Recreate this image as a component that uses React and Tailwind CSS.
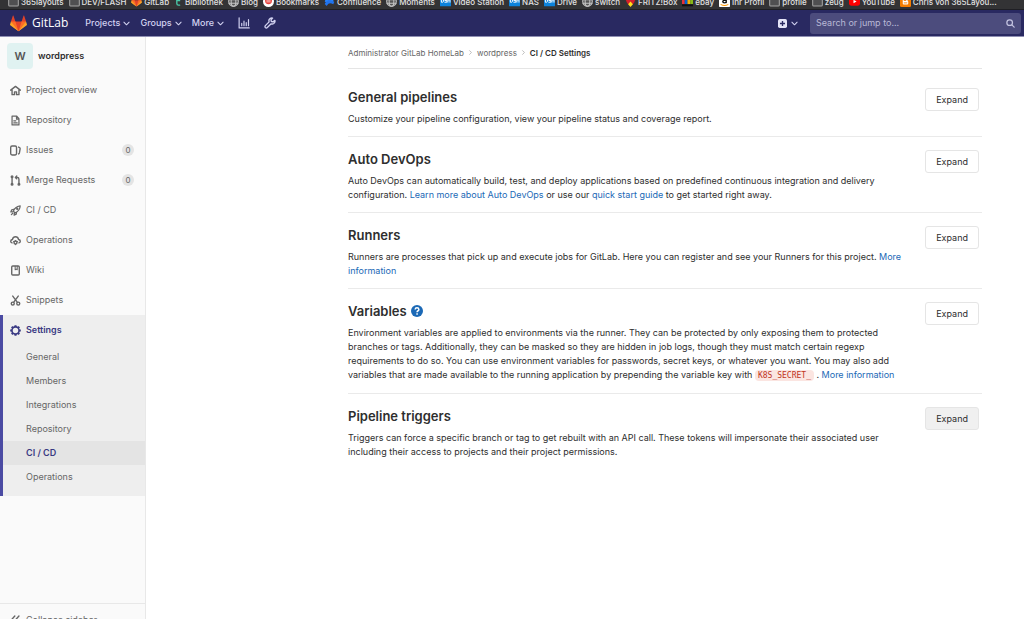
import React from "react";

const S = ({ children, className = "size-[11px]", ...rest }) => (
  <svg viewBox="0 0 16 16" fill="none" stroke="currentColor" strokeWidth="2" strokeLinecap="round" strokeLinejoin="round" aria-hidden="true" className={`${className} shrink-0`} {...rest}>
    {children}
  </svg>
);

const Tanuki = ({ className }) => (
  <svg viewBox="0 0 36 36" className={`${className} shrink-0`} aria-hidden="true">
    <path fill="#e24329" d="M2 14l9.38 9v-9l-4-12.28c-.205-.632-1.176-.632-1.38 0z" />
    <path fill="#e24329" d="M34 14l-9.38 9v-9l4-12.28c.205-.632 1.176-.632 1.38 0z" />
    <path fill="#e24329" d="M18 34.38 3 14h30z" />
    <path fill="#fc6d26" d="M18 34.38 11.38 14H2l4 11z" />
    <path fill="#fc6d26" d="M18 34.38 24.62 14H34l-4 11z" />
    <path fill="#fca326" d="M2 14L.1 20.16c-.18.565 0 1.2.5 1.56l17.42 12.66z" />
    <path fill="#fca326" d="M34 14l1.9 6.16c.18.565 0 1.2-.5 1.56L18 34.38z" />
  </svg>
);

const Folder = () => (
  <S className="h-[11px] w-[11px] text-[#a5a5a5]" strokeWidth="1.5">
    <rect x="1" y="1" width="14" height="13.5" rx="1.5" fill="#4f4f51" />
  </S>
);
const Globe = () => (
  <S className="size-[11px] text-[#c4c4c4]" strokeWidth="1.5">
    <circle cx="8" cy="8" r="7" fill="#555" />
    <ellipse cx="8" cy="8" rx="3.4" ry="7" />
    <path d="M1.5 10.5h13M1.5 5.5h13" />
  </S>
);
const Dsm = () => (
  <S stroke="none">
    <rect width="16" height="15" rx="1" fill="#0c83dc" />
    <path d="M2 4v5h2l1-1V5L4 4zM10 4 7 4v2.5h3V9H7M11.500 9V4L13 6.500 14.500 4v5" stroke="#fff" strokeWidth="1.400" fill="none" />
  </S>
);
const BibIcon = () => (
  <S className="h-[11px] w-[9px] text-[#49c9a7]" strokeWidth="2.4"><path d="M5 1v10.500q0 3 3 3h2M5 6.500h5" /></S>
);
const RedIcon = () => (
  <S stroke="none">
    <circle cx="8" cy="8" r="8" fill="#fff" />
    <circle cx="8" cy="7" r="5" fill="#e8413c" />
    <path d="M5.500 6h5M5.500 8.500h5" stroke="#fff" strokeWidth="1" />
  </S>
);
const Confluence = () => (
  <S stroke="none">
    <path fill="#2684ff" d="M15 4.500 12 1.500C8.500 7.500 6.500 6.500 2.500 4.500L1 8c7 3.500 10.500 3 14-3.500z" />
    <path fill="#2073ee" d="M1 11.500 4 14.500c3-5.500 5.500-4.500 9.500-2.500L15 8.500C8 5 4.500 5.500 1 11.500z" />
  </S>
);
const Fritz = () => (
  <S stroke="none">
    <path fill="#d3202b" d="M0 3 4 0h8l4 3-3 7-5 5-5-5z" />
    <path fill="#ffdf1b" d="m8 8 3.500 4L8 16l-3.500-4z" />
  </S>
);
const Ebay = () => (
  <S stroke="none">
    <path fill="#e53238" d="M0 0h4v12H0z" />
    <path fill="#0064d2" d="M4 0h4v12H4z" />
    <path fill="#f5af02" d="M8 0h4v12H8z" />
    <path fill="#86b817" d="M12 0h4v12h-4z" />
    <path fill="#111" d="M0 12h16v3H0z" />
  </S>
);
const Amazon = () => (
  <S stroke="none">
    <rect width="16" height="16" rx="1" fill="#fff" />
    <path d="M5.500 3.500q5-2 5 1v5M10.500 6q-5 0-5 2t2.500 2 2.500-2" fill="none" stroke="#111" strokeWidth="2" />
    <path d="M3 12.500q5 2.500 10 0" fill="none" stroke="#f90" strokeWidth="1.500" />
  </S>
);
const YouTube = () => (
  <S stroke="none">
    <rect y="2" width="16" height="12" rx="3" fill="#f00" />
    <path fill="#fff" d="m6.500 5.500 4.500 2.500-4.500 2.500z" />
  </S>
);
const Blogger = () => (
  <S stroke="none">
    <rect width="16" height="16" rx="2" fill="#f57d00" />
    <path d="M4 4h5q2 0 2 2t1 2v3q0 1.500-1.500 1.500h-5Q4 12.500 4 11z" fill="#fff" />
    <path d="M6 6.500h2.500M6 10h4" stroke="#f57d00" strokeWidth="1.300" />
  </S>
);

const bookmarks = [
  [Folder, "365layouts"],
  [Folder, "DEV/FLASH"],
  [() => <Tanuki className="size-[11px]" />, "GitLab"],
  [BibIcon, "Bibliothek"],
  [Globe, "Blog"],
  [RedIcon, "Bookmarks"],
  [Confluence, "Confluence"],
  [Globe, "Moments"],
  [Dsm, "Video Station"],
  [Dsm, "NAS"],
  [Dsm, "Drive"],
  [Globe, "switch"],
  [Fritz, "FRITZ!Box"],
  [Ebay, "ebay"],
  [Amazon, "Ihr Profil"],
  [Folder, "profile"],
  [Folder, "zeug"],
  [YouTube, "YouTube"],
  [Blogger, "Chris von 365Layou..."],
];

const Chevron = () => (
  <S className="size-[7px]" strokeWidth="2.4"><path d="m2 5 6 6 6-6" /></S>
);

const navItems = [
  ["Project overview", null, <S key="i"><path d="M1 7.500 8 2l7 5.500M3 7v7h3.500v-4h3v4H13V7" /></S>],
  ["Repository", null, <S key="i"><path d="M3 1.500h6.500l3.500 4v9H3zM9.500 2v4H13M5.500 8.500h3M5.500 11.500h5" strokeWidth="1.800" /></S>],
  ["Issues", "0", <S key="i"><rect x="1" y="1.500" width="8.500" height="13" rx="2" /><path d="M12.500 3q2.500.500 2.200 2.500l-1 6q-.2 1-1.200 1.500" /></S>],
  ["Merge Requests", "0", <S key="i"><path d="M3 3.500v9M13 12.500V6q0-2.500-2.500-2.500H8M9.800 1.500 7.800 3.500l2 2" /><circle cx="3" cy="2.700" r="1.200" /><circle cx="3" cy="13.300" r="1.200" /><circle cx="13" cy="13.300" r="1.200" /></S>],
  ["CI / CD", null, <S key="i" strokeWidth="1.800"><path d="M5 9q2-6.500 9.800-7.800Q14.500 8.500 7.500 11.500zM5.500 6.500 2.500 7 1.200 10l3.300-.5M9.500 10.500l-.5 3-3 1.300.500-3.300M2 14l2-2" /><circle cx="10.500" cy="5.500" r=".8" /></S>],
  ["Operations", null, <S key="i"><path d="M3 11.500Q1 11 1 9t2.500-2.500Q4.500 2.500 8 2.500t4.500 4Q15 7 15 9t-2 2.500" /><circle cx="8" cy="11" r="2.200" /><path d="M8 7.800v1M8 13.200v1M5 9.500l1 .5M11 9.500l-1 .5" strokeWidth="1.400" /></S>],
  ["Wiki", null, <S key="i"><rect x="2.500" y="1.500" width="11" height="13" rx="1.500" /><path d="M7.500 2v5l1.500-1 1.500 1V2" strokeWidth="1.500" /></S>],
  ["Snippets", null, <S key="i"><path d="m4 1.500 6.500 9M12 1.500l-6.500 9" /><circle cx="4" cy="12.500" r="2.200" /><circle cx="12" cy="12.500" r="2.200" /></S>],
];

const Gear = () => (
  <S strokeWidth="2.400">
    <circle cx="8" cy="8" r="5.200" />
    <path strokeWidth="3" strokeLinecap="butt" d="M8 .3v2.500M8 13.200v2.500M.3 8h2.500M13.200 8h2.500M2.500 2.500l1.700 1.700M11.800 11.800l1.700 1.700M2.500 13.500l1.700-1.700M11.800 4.200l1.700-1.700" />
  </S>
);

const subItems = ["General", "Members", "Integrations", "Repository", "CI / CD", "Operations"];

const A = ({ children }) => <a href="#" className="text-[#1b69b6]">{children}</a>;

const sections = [
  { title: "General pipelines", body: "Customize your pipeline configuration, view your pipeline status and coverage report." },
  { title: "Auto DevOps", body: <>Auto DevOps can automatically build, test, and deploy applications based on predefined continuous integration and delivery configuration. <A>Learn more about Auto DevOps</A> or use our <A>quick start guide</A> to get started right away.</> },
  { title: "Runners", body: <>Runners are processes that pick up and execute jobs for GitLab. Here you can register and see your Runners for this project. <A>More information</A></> },
  { title: "Variables", help: true, body: <>Environment variables are applied to environments via the runner. They can be protected by only exposing them to protected branches or tags. Additionally, they can be masked so they are hidden in job logs, though they must match certain regexp requirements to do so. You can use environment variables for passwords, secret keys, or whatever you want. You may also add variables that are made available to the running application by prepending the variable key with <code className="rounded-sm bg-[#fbe5e1] px-[3px] py-px font-['DejaVu_Sans_Mono',monospace] text-[8px] text-[#c0341d]">K8S_SECRET_</code> . <A>More information</A></> },
  { title: "Pipeline triggers", active: true, body: "Triggers can force a specific branch or tag to get rebuilt with an API call. These tokens will impersonate their associated user including their access to projects and their project permissions." },
];

export default function App() {
  return (
    <div className="flex h-screen flex-col overflow-hidden bg-white font-['Inter',sans-serif] text-[9px] leading-[14px] text-[#2e2e2e]">
      <nav aria-label="Bookmarks" className="flex h-[10px] shrink-0 items-end gap-[5px] overflow-hidden border-b border-[#1f1f24] bg-[#333335] px-2 text-[#e2e2e2]">
        {bookmarks.map(([Icon, label]) => (
          <a key={label} href="#" className="flex h-[15px] shrink-0 items-center gap-[2px] text-[8px] font-medium whitespace-nowrap">
            <Icon />
            {label}
          </a>
        ))}
      </nav>

      <header className="flex h-[27px] shrink-0 items-center border-b border-[#8f8fb3] bg-[#292961] pr-[3px] pl-[10px] font-medium text-[#d1d1f0]">
        <a href="#" className="flex items-center gap-[5px] font-['Open_Sans',sans-serif] text-[12px] text-white">
          <Tanuki className="size-[17px]" />
          GitLab
        </a>
        <div className="ml-[17px] flex items-center gap-[10px]">
          {["Projects", "Groups", "More"].map((t) => (
            <button key={t} type="button" className="flex items-center gap-[3px]">
              {t}
              <Chevron />
            </button>
          ))}
          <button type="button" aria-label="Activity" className="ml-1">
            <S strokeWidth="1.600" className="block size-[12px]"><path d="M1.500 1v13.500H15M5 11.500v-3M8 11.500v-6M11 11.500v-4M14 11.500v-8" /></S>
          </button>
          <button type="button" aria-label="Admin area" className="ml-1">
            <S strokeWidth="1.800" className="block size-[12px]"><path d="M14.500 4.500 12 6.500 9.800 6l-.5-2.200L11.500 1.500Q8.500.800 7 3.200q-.8 1.500-.2 3.300L1.800 11.500q-1 1.300 0 2.500 1.300 1.200 2.600.1l5.100-5q2 .5 3.500-.4 2.200-1.500 1.500-4.200z" /></S>
          </button>
        </div>
        <button type="button" aria-label="New" className="ml-auto flex items-center gap-1">
          <svg viewBox="0 0 16 16" className="size-[9px]" aria-hidden="true"><rect width="16" height="16" rx="3" fill="#e4e4f7" /><path d="M8 3.500v9M3.500 8h9" stroke="#292961" strokeWidth="2.400" /></svg>
          <Chevron />
        </button>
        <label className="ml-3 flex h-[21px] w-[211px] items-center rounded-[3px] bg-[#4c4c7d] pr-[6px] pl-[6px]">
          <input type="search" aria-label="Search or jump to" placeholder="Search or jump to..." className="min-w-0 flex-1 bg-transparent font-normal outline-none placeholder:text-[#b9b9d6]" />
          <S className="size-[9px] text-[#c3c3e0]" strokeWidth="2.200"><circle cx="6.500" cy="6.500" r="5" /><path d="m10.500 10.500 4 4" /></S>
        </label>
      </header>

      <div className="flex min-h-0 flex-1">
        <aside className="flex w-[146px] shrink-0 flex-col border-r border-[#e8e8e8] bg-[#fafafa] text-[#666]">
          <a href="#" className="flex h-[38px] shrink-0 items-center gap-[5px] pl-[7px] font-semibold text-[#2e2e2e]">
            <span className="flex size-[26px] items-center justify-center rounded-sm bg-[#e0f2f1] text-[11px] text-[#555]">W</span>
            wordpress
          </a>
          <ul>
            {navItems.map(([label, count, icon]) => (
              <li key={label}>
                <a href="#" className="flex h-[30px] items-center gap-[5px] pr-[11px] pl-[10px]">
                  {icon}
                  {label}
                  {count && <span className="ml-auto flex size-[12px] items-center justify-center rounded-full bg-[#e4e4e4] text-[8px]">{count}</span>}
                </a>
              </li>
            ))}
            <li className="border-l-[3px] border-[#4b4ba3] bg-[#eee]">
              <a href="#" className="flex h-[30px] items-center gap-[5px] pl-[7px] font-semibold text-[#393982]">
                <Gear />
                Settings
              </a>
              <ul className="pb-[7px]">
                {subItems.map((t) => (
                  <li key={t}>
                    <a href="#" className={`flex h-6 items-center pl-[23px] ${t === "CI / CD" ? "bg-[#e4e4e4] font-semibold text-[#393982]" : ""}`}>{t}</a>
                  </li>
                ))}
              </ul>
            </li>
          </ul>
          <div className="mt-auto h-[16px] shrink-0 overflow-hidden border-t border-[#e8e8e8]">
            <button type="button" className="flex h-[31px] w-full items-center gap-[5px] pl-[10px]">
              <S><path d="M7 3 2.500 8 7 13M13 3 8.500 8l4.500 5" /></S>
              Collapse sidebar
            </button>
          </div>
        </aside>

        <main className="min-w-0 flex-1 pr-[42px] pl-[202px]">
          <nav aria-label="Breadcrumb" className="mb-[6px] flex h-[32px] items-center gap-1 border-b border-[#e5e5e5] text-[8px] text-[#666]">
            <a href="#">Administrator GitLab HomeLab</a>
            <S className="size-[5px] text-[#999]" strokeWidth="2"><path d="m5 2 6 6-6 6" /></S>
            <a href="#">wordpress</a>
            <S className="size-[5px] text-[#999]" strokeWidth="2"><path d="m5 2 6 6-6 6" /></S>
            <a href="#" className="font-semibold text-[#2e2e2e]">CI / CD Settings</a>
          </nav>
          {sections.map((s) => (
            <section key={s.title} className="flex items-start justify-between border-b border-[#eaeaea] pt-[13px] pr-[3px] pb-[10px] last:border-b-0">
              <div className="max-w-[560px]">
                <h4 className="mb-[6px] flex items-center gap-1 text-[13px] leading-[18px] font-semibold">
                  {s.title}
                  {s.help && (
                    <a href="#" aria-label="Help">
                      <svg viewBox="0 0 16 16" className="size-[12px]" aria-hidden="true"><circle cx="8" cy="8" r="8" fill="#1b69b6" /><path d="M5.500 6q.2-2.300 2.500-2.300T10.500 6Q10.500 7.200 9 8q-.9.500-.9 1.500M8.100 11v2" fill="none" stroke="#fff" strokeWidth="2" /></svg>
                    </a>
                  )}
                </h4>
                <p>{s.body}</p>
              </div>
              <button type="button" className={`h-[23px] shrink-0 rounded-[3px] border border-[#e5e5e5] px-[10px] ${s.active ? "bg-[#f0f0f0]" : "bg-white"}`}>Expand</button>
            </section>
          ))}
        </main>
      </div>
    </div>
  );
}
